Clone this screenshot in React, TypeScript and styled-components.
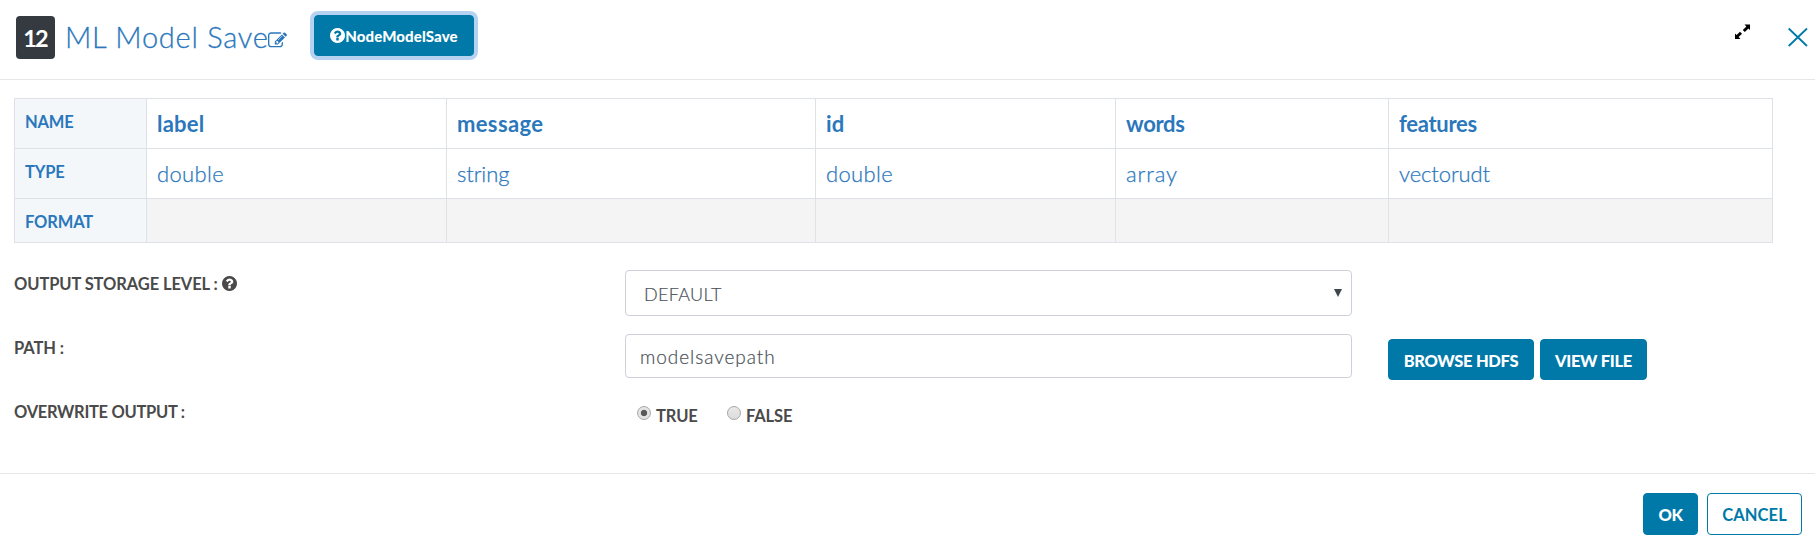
import React from 'react';
import styled, { createGlobalStyle, css } from 'styled-components';

const GlobalStyle = createGlobalStyle`
  * { box-sizing: border-box; }
  body {
    margin: 0;
    background: #fff;
    color: #4a4a4a;
    font-family: Lato, "Liberation Sans", sans-serif;
    overflow: hidden;
  }
`;

const teal = '#0079a9';
const blue = '#2b77bc';

const Dialog = styled.div`
  display: flex;
  flex-direction: column;
  height: 545px;
`;

const Header = styled.header`
  display: flex;
  align-items: flex-start;
  height: 80px;
  padding: 15px 6px 0 16px;
  border-bottom: 1px solid #e5e6e8;
`;

const Badge = styled.span`
  width: 39px;
  height: 43px;
  margin-top: 1px;
  padding-right: 1px;
  border-radius: 4px;
  background: #343a40;
  color: #fff;
  font-size: 23.5px;
  font-weight: 700;
  letter-spacing: -2px;
  line-height: 45px;
  text-align: center;
`;

const Title = styled.h1`
  width: 204px;
  margin: 0 0 0 10px;
  color: ${blue};
  font-size: 29px;
  font-weight: 300;
  line-height: 43px;
  letter-spacing: 0.75px;
  white-space: nowrap;
  -webkit-text-stroke: 0.3px ${blue};
`;

const EditIcon = styled.svg`
  width: 19px;
  height: 19px;
  margin: 16px 0 0 -1px;
  fill: ${blue};
`;

const Button = styled.button<{ $w: number; $h: number; $outline?: boolean; $focus?: boolean }>`
  display: flex;
  align-items: center;
  justify-content: center;
  width: ${p => p.$w}px;
  height: ${p => p.$h}px;
  padding: 2px 0 0;
  border: 1px solid ${teal};
  border-radius: 4px;
  background: ${p => (p.$outline ? '#fff' : teal)};
  color: ${p => (p.$outline ? teal : '#fff')};
  font-family: inherit;
  font-size: 16.5px;
  font-weight: ${p => (p.$outline ? 700 : 900)};
  letter-spacing: ${p => (p.$outline ? 0.1 : -0.3)}px;
  white-space: nowrap;
  ${p => p.$focus && css`
    padding-top: 0;
    margin-left: 27px;
    font-size: 15px;
    letter-spacing: 0.1px;
    box-shadow: 0 0 0 4px #b5d3f0;
  `}
`;

const HelpIcon = styled.svg<{ $size: number }>`
  width: ${p => p.$size}px;
  height: ${p => p.$size}px;
  flex: none;
  fill: currentColor;
`;

const WindowTools = styled.div`
  display: flex;
  gap: 38px;
  margin-left: auto;
`;

const ExpandIcon = styled.svg`
  width: 15px;
  height: 15px;
  margin-top: 9px;
`;

const CloseIcon = styled.svg`
  width: 21px;
  height: 20px;
  margin-top: 12px;
`;

const Body = styled.main`
  height: 393px;
  padding: 18px 0 0 14px;
`;

const Schema = styled.table`
  width: 1759px;
  table-layout: fixed;
  border-collapse: collapse;
  color: ${blue};
`;

const RowHead = styled.th`
  padding: 14px 10px 0;
  border: 1px solid #dee2e6;
  background: #f3f7fa;
  font-size: 16.5px;
  font-weight: 700;
  letter-spacing: -0.15px;
  line-height: 18px;
  text-align: left;
  vertical-align: top;
`;

const Cell = styled.td<{ $bold?: boolean; $empty?: boolean }>`
  height: ${p => (p.$empty ? 44 : 50)}px;
  padding: 0 10px;
  border: 1px solid #dee2e6;
  background: ${p => (p.$empty ? '#f4f4f4' : '#fff')};
  font-size: 22px;
  font-weight: ${p => (p.$bold ? 700 : 300)};
  line-height: 30px;
  ${p => !p.$bold && css`-webkit-text-stroke: 0.25px ${blue};`}
`;

const Word = styled.span<{ $track: number }>`
  letter-spacing: ${p => p.$track}px;
`;

const Form = styled.div`
  display: grid;
  grid-template-columns: 611px 727px 1fr;
  grid-template-rows: 64px 64px 50px;
  margin-top: 27px;
`;

const Label = styled.label<{ $track?: number }>`
  display: flex;
  align-items: center;
  height: 20px;
  margin-top: 4px;
  gap: 4px;
  font-size: 16.5px;
  font-weight: 700;
  letter-spacing: ${p => p.$track ?? 0}px;
  white-space: pre;
`;

const LabelHelp = styled.span`
  display: flex;
  padding-bottom: 2px;
`;

const Field = styled.div<{ $select?: boolean }>`
  display: flex;
  align-items: center;
  justify-content: space-between;
  height: ${p => (p.$select ? 46 : 44)}px;
  padding: ${p => (p.$select ? '1px 9px 0 18px' : '0 15px 0 14px')};
  border: 1px solid #ced0da;
  border-radius: 4px;
  color: #495057;
  font-size: ${p => (p.$select ? 18 : 19)}px;
  font-weight: 300;
  letter-spacing: ${p => (p.$select ? 0.3 : 0.95)}px;
  -webkit-text-stroke: 0.2px #495057;
`;

const Caret = styled.svg`
  width: 8px;
  height: 8px;
  margin-top: -2px;
  fill: #3f464d;
`;

const FileActions = styled.div`
  display: flex;
  gap: 6px;
  padding: 5px 0 0 36px;
`;

const Radios = styled.div`
  display: flex;
  padding: 8px 0 0 12px;
`;

const Option = styled.label<{ $w: number }>`
  display: flex;
  align-items: flex-start;
  gap: 5px;
  width: ${p => p.$w}px;
  font-size: 16.5px;
  font-weight: 700;
  line-height: 18px;
`;

const Dot = styled.span<{ $on?: boolean }>`
  width: 14px;
  height: 14px;
  border: 1px solid #a9a9a9;
  border-radius: 50%;
  background: ${p => p.$on
    ? 'radial-gradient(circle, #5a5a5a 0 2.8px, #e4e4e4 3.6px)'
    : 'linear-gradient(#e9e9e9, #dcdcdc)'};
`;

const OptionText = styled.span`
  padding-top: 1px;
  letter-spacing: -0.1px;
`;

const Footer = styled.footer`
  display: flex;
  justify-content: flex-end;
  gap: 9px;
  height: 72px;
  padding: 19px 13px 0 0;
  border-top: 1px solid #e5e6e8;
`;

const Help = ({ size }: { size: number }) => (
  <HelpIcon $size={size} viewBox="128 128 1536 1536">
    <path d="M1024 1376v-192q0-14-9-23t-23-9h-192q-14 0-23 9t-9 23v192q0 14 9 23t23 9h192q14 0 23-9t9-23zm256-672q0-88-55.5-163t-138.5-116-170-41q-243 0-371 213-15 24 8 42l132 100q7 6 19 6 16 0 25-12 53-68 86-92 34-24 86-24 48 0 85.5 26t37.5 59q0 38-20 61t-68 45q-63 28-115.5 86.5t-52.5 125.5v36q0 14 9 23t23 9h192q14 0 23-9t9-23q0-19 21.5-49.5t54.5-49.5q32-18 49-28.5t46-35 44.5-48 28-60.5 12.5-81zm384 192q0 209-103 385.5t-279.5 279.5-385.5 103-385.5-103-279.5-279.5-103-385.5 103-385.5 279.5-279.5 385.5-103 385.5 103 279.5 279.5 103 385.5z" />
  </HelpIcon>
);

type Column = { name: string; type: string; width: number; nameTrack: number; typeTrack: number };

const columns: Column[] = [
  { name: 'label', type: 'double', width: 300, nameTrack: 0.2, typeTrack: 0.35 },
  { name: 'message', type: 'string', width: 369, nameTrack: 0.35, typeTrack: -0.1 },
  { name: 'id', type: 'double', width: 300, nameTrack: 0.2, typeTrack: 0.35 },
  { name: 'words', type: 'array', width: 273, nameTrack: -0.3, typeTrack: 0.9 },
  { name: 'features', type: 'vectorudt', width: 384, nameTrack: -0.3, typeTrack: -0.1 },
];

export default function App() {
  return (
    <Dialog>
      <GlobalStyle />
      <Header>
        <Badge>12</Badge>
        <Title>ML Model Save</Title>
        <EditIcon viewBox="0 0 1792 1792">
          <path d="M888 1184l116-116-152-152-116 116v56h96v96h56zm440-720q-16-16-33 1l-350 350q-17 17-1 33t33-1l350-350q17-17 1-33zm80 594v190q0 119-84.5 203.5t-203.5 84.5h-832q-119 0-203.5-84.5t-84.5-203.5v-832q0-119 84.5-203.5t203.5-84.5h832q63 0 117 25 15 7 18 23 3 17-9 29l-49 49q-14 14-32 8-23-6-45-6h-832q-66 0-113 47t-47 113v832q0 66 47 113t113 47h832q66 0 113-47t47-113v-126q0-13 9-22l64-64q15-15 35-7t20 29zm-96-738l288 288-672 672h-288v-288zm444 132l-92 92-288-288 92-92q28-28 68-28t68 28l152 152q28 28 28 68t-28 68z" />
        </EditIcon>
        <Button $w={160} $h={41} $focus>
          <Help size={15} />
          NodeModelSave
        </Button>
        <WindowTools>
          <ExpandIcon viewBox="0 0 15 15">
            <path d="M9.5 0.5H15V6l-1.6-1.6-3.6 3.6-2-2 3.6-3.6zM5.5 15H0V9.5l1.6 1.6 3.4-3.4 2 2-3.4 3.4z" fill="#000" />
          </ExpandIcon>
          <CloseIcon viewBox="0 0 21 20">
            <path d="M0.7 1.5L19 19M19 1.5L0.7 19" stroke={teal} strokeWidth="1.8" />
          </CloseIcon>
        </WindowTools>
      </Header>
      <Body>
        <Schema>
          <colgroup>
            <col style={{ width: 132 }} />
            {columns.map((c, i) => <col key={i} style={{ width: c.width }} />)}
          </colgroup>
          <tbody>
            <tr>
              <RowHead>NAME</RowHead>
              {columns.map((c, i) => <Cell key={i} $bold><Word $track={c.nameTrack}>{c.name}</Word></Cell>)}
            </tr>
            <tr>
              <RowHead>TYPE</RowHead>
              {columns.map((c, i) => <Cell key={i}><Word $track={c.typeTrack}>{c.type}</Word></Cell>)}
            </tr>
            <tr>
              <RowHead>FORMAT</RowHead>
              {columns.map((_, i) => <Cell key={i} $empty />)}
            </tr>
          </tbody>
        </Schema>
        <Form>
          <Label $track={-0.1}>OUTPUT STORAGE LEVEL :<LabelHelp><Help size={15} /></LabelHelp></Label>
          <Field $select>
            DEFAULT
            <Caret viewBox="0 0 8 8"><path d="M0 0h8L4 8z" /></Caret>
          </Field>
          <span />
          <Label $track={-0.1}>PATH :</Label>
          <Field>modelsavepath</Field>
          <FileActions>
            <Button $w={146} $h={41}>BROWSE HDFS</Button>
            <Button $w={107} $h={41}>VIEW FILE</Button>
          </FileActions>
          <Label $track={-0.3}>OVERWRITE OUTPUT :</Label>
          <Radios>
            <Option $w={90}><Dot $on /><OptionText>TRUE</OptionText></Option>
            <Option $w={90}><Dot /><OptionText>FALSE</OptionText></Option>
          </Radios>
        </Form>
      </Body>
      <Footer>
        <Button $w={55} $h={42}>OK</Button>
        <Button $w={95} $h={42} $outline>CANCEL</Button>
      </Footer>
    </Dialog>
  );
}
